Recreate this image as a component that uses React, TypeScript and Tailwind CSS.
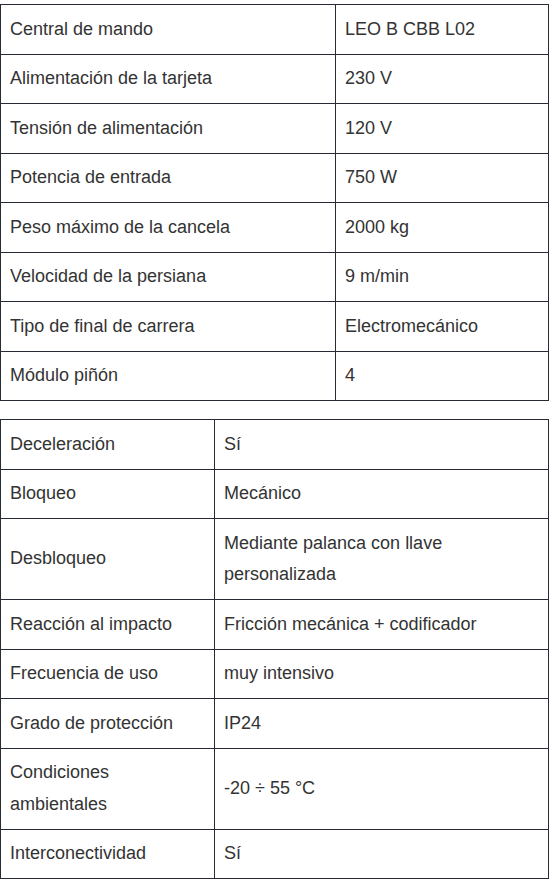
const SPECS_A: [string, string][] = [
  ['Central de mando', 'LEO B CBB L02'],
  ['Alimentación de la tarjeta', '230 V'],
  ['Tensión de alimentación', '120 V'],
  ['Potencia de entrada', '750 W'],
  ['Peso máximo de la cancela', '2000 kg'],
  ['Velocidad de la persiana', '9 m/min'],
  ['Tipo de final de carrera', 'Electromecánico'],
  ['Módulo piñón', '4'],
];

const SPECS_B: [string, string][] = [
  ['Deceleración', 'Sí'],
  ['Bloqueo', 'Mecánico'],
  ['Desbloqueo', 'Mediante palanca con llave personalizada'],
  ['Reacción al impacto', 'Fricción mecánica + codificador'],
  ['Frecuencia de uso', 'muy intensivo'],
  ['Grado de protección', 'IP24'],
  ['Condiciones ambientales', '-20 ÷ 55 °C'],
  ['Interconectividad', 'Sí'],
];

const cell = 'border border-[#262b36] px-[9px] py-[8.5px] text-left align-middle font-normal';

function SpecTable({ rows, firstCol, className }: { rows: [string, string][]; firstCol: string; className?: string }) {
  return (
    <table className={`w-[549px] table-fixed border-collapse ${className ?? ''}`}>
      <colgroup>
        <col className={firstCol} />
        <col />
      </colgroup>
      <tbody>
        {rows.map(([label, value]) => (
          <tr key={label}>
            <td className={cell}>{label}</td>
            <td className={cell}>{value}</td>
          </tr>
        ))}
      </tbody>
    </table>
  );
}

export default function App() {
  return (
    <div className="min-h-[880px] w-[549px] bg-white pt-[4px] text-[18px] leading-[1.75] text-[#333333] font-['Liberation_Sans',Arial,sans-serif]">
      <SpecTable rows={SPECS_A} firstCol="w-[335px]" className="mb-[18px]" />
      <SpecTable rows={SPECS_B} firstCol="w-[214px]" />
    </div>
  );
}
